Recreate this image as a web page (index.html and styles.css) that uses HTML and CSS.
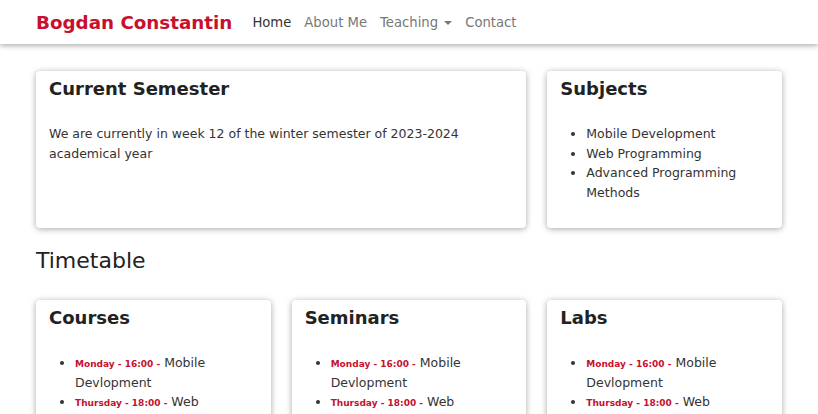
FILE: index.html
```html
<!DOCTYPE html>
<html lang="en">
<head>
    <meta charset="UTF-8">
    <meta name="viewport" content="width=device-width, initial-scale=1.0">
    <title>Bogdan Constantin</title>
    <link rel="stylesheet" href="styles.css">
</head>
<body>
    <!-- Navbar -->
    <nav class="navbar">
        <a class="brand" href="#">Bogdan Constantin</a>
        <ul class="nav-links">
            <li><a class="active" href="#">Home</a></li>
            <li><a href="#">About Me</a></li>
            <li><a href="#">Teaching <span class="caret"></span></a></li>
            <li><a href="#">Contact</a></li>
        </ul>
    </nav>

    <main class="container">
        <div class="grid">
            <div class="card wide">
                <h3>Current Semester</h3>
                <p>We are currently in week 12 of the winter semester of 2023-2024 academical year</p>
            </div>
            <div class="card">
                <h3>Subjects</h3>
                <ul>
                    <li>Mobile Development</li>
                    <li>Web Programming</li>
                    <li>Advanced Programming Methods</li>
                </ul>
            </div>
        </div>

        <h2 class="section-title">Timetable</h2>

        <div class="grid">
            <div class="card">
                <h3>Courses</h3>
                <ul>
                    <li><span class="when">Monday - 16:00 -</span> Mobile Devlopment</li>
                    <li><span class="when">Thursday - 18:00 -</span> Web Programming</li>
                </ul>
            </div>
            <div class="card">
                <h3>Seminars</h3>
                <ul>
                    <li><span class="when">Monday - 16:00 -</span> Mobile Devlopment</li>
                    <li><span class="when">Thursday - 18:00 -</span> Web Programming</li>
                </ul>
            </div>
            <div class="card">
                <h3>Labs</h3>
                <ul>
                    <li><span class="when">Monday - 16:00 -</span> Mobile Devlopment</li>
                    <li><span class="when">Thursday - 18:00 -</span> Web Programming</li>
                </ul>
            </div>
        </div>
    </main>
</body>
</html>
```

FILE: styles.css
```css
:root {
    --red: #c8102e;
    --text-color: #222;
    --muted: #777;
}
* {
    margin: 0;
    padding: 0;
    box-sizing: border-box;
}
body {
    font-family: "DejaVu Sans", sans-serif;
    font-size: 12.5px;
    color: var(--text-color);
    background-color: white;
}
a {
    text-decoration: none;
}

.navbar {
    height: 44px;
    display: flex;
    align-items: center;
    padding: 0 36px;
    background-color: white;
    box-shadow: 0 2px 5px rgba(0, 0, 0, 0.3);
}
.brand {
    color: var(--red);
    font-weight: bold;
    font-size: 18.3px;
    margin-right: 20px;
}
.nav-links {
    display: flex;
    list-style: none;
    gap: 13px;
}
.nav-links a {
    color: var(--muted);
    font-size: 13.2px;
}
.nav-links a.active {
    color: #333;
}
.caret {
    display: inline-block;
    border-top: 4px solid var(--muted);
    border-left: 4px solid transparent;
    border-right: 4px solid transparent;
    vertical-align: 2px;
    margin-left: 2px;
}

.container {
    width: 746px;
    margin: 27px auto 0;
}
.grid {
    display: grid;
    grid-template-columns: repeat(3, 1fr);
    gap: 21px;
}
.card {
    border-radius: 4px;
    padding: 5px 13px 5px;
    box-shadow: 0 1px 6px rgba(0, 0, 0, 0.35);
    background-color: white;
}
.card.wide {
    grid-column: span 2;
}
.card h3 {
    font-size: 18px;
    font-weight: 600;
    line-height: 25px;
}
.card p, .card ul {
    margin: 23px 0 21px;
    line-height: 19.5px;
    color: #333;
}
.card ul {
    padding-left: 26px;
}
.when {
    color: var(--red);
    font-weight: bold;
    font-size: 9px;
    line-height: 1;
}
.section-title {
    font-size: 22px;
    font-weight: normal;
    margin: 20px 0 27px;
}
```
